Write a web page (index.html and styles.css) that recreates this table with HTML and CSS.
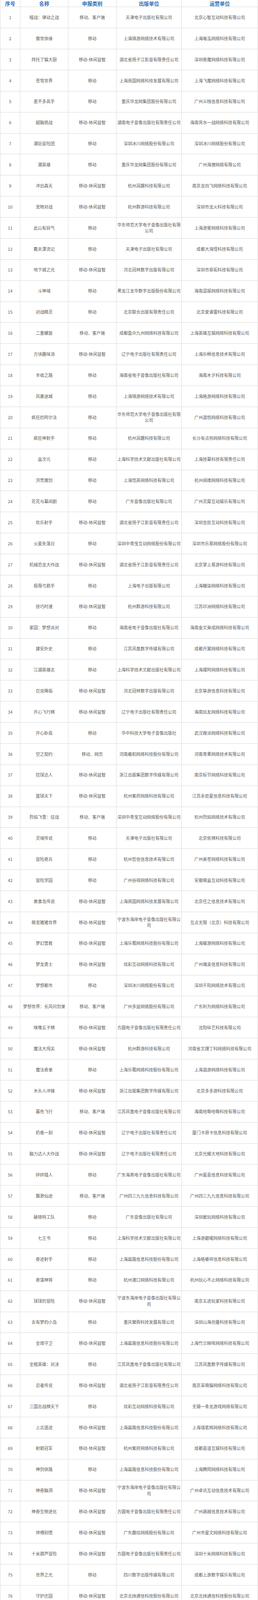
FILE: index.html
```html
<!DOCTYPE html>
<html lang="zh-CN">
<head>
<meta charset="utf-8">
<title>游戏名单</title>
<link rel="stylesheet" href="styles.css">
</head>
<body>
<div class="list" role="table">
<div class="row head" role="row"><div class="cell">序号</div><div class="cell">名称</div><div class="cell">申报类别</div><div class="cell">出版单位</div><div class="cell">运营单位</div></div>
<div class="row" role="row"><div class="cell">1</div><div class="cell">暗战：律动之战</div><div class="cell">移动、客户端</div><div class="cell">天津电子出版社有限公司</div><div class="cell">北京心智互动科技有限公司</div></div>
<div class="row" role="row"><div class="cell">2</div><div class="cell">傲世侠缘</div><div class="cell">移动</div><div class="cell">上海锦游网络技术有限公司</div><div class="cell">上海喻泓网络科技有限公司</div></div>
<div class="row" role="row"><div class="cell">3</div><div class="cell">拜托了猫大厨</div><div class="cell">移动-休闲益智</div><div class="cell">湖北省扬子江影音有限责任公司</div><div class="cell">深圳奇魔网络科技有限公司</div></div>
<div class="row" role="row"><div class="cell">4</div><div class="cell">苍穹世界</div><div class="cell">移动</div><div class="cell">上海商国网络科技发展有限公司</div><div class="cell">上海飞魔网络科技有限公司</div></div>
<div class="row" role="row"><div class="cell">5</div><div class="cell">差不多高手</div><div class="cell">移动</div><div class="cell">重庆华龙网集团股份有限公司</div><div class="cell">广州义栈信息科技有限公司</div></div>
<div class="row" role="row"><div class="cell">6</div><div class="cell">超脑挑战</div><div class="cell">移动-休闲益智</div><div class="cell">湖南电子音像出版社有限责任公司</div><div class="cell">海南背水一战网络科技有限公司</div></div>
<div class="row" role="row"><div class="cell">7</div><div class="cell">潮玩冒险团</div><div class="cell">移动</div><div class="cell">深圳冰川网络股份有限公司</div><div class="cell">深圳冰川网络股份有限公司</div></div>
<div class="row" role="row"><div class="cell">8</div><div class="cell">潮英雄</div><div class="cell">移动</div><div class="cell">重庆华龙网集团股份有限公司</div><div class="cell">广州海狸网络有限公司</div></div>
<div class="row" role="row"><div class="cell">9</div><div class="cell">冲出森天</div><div class="cell">移动-休闲益智</div><div class="cell">杭州润趣科技有限公司</div><div class="cell">南京龙向飞网络科技有限公司</div></div>
<div class="row" role="row"><div class="cell">10</div><div class="cell">宠物对战</div><div class="cell">移动-休闲益智</div><div class="cell">杭州群游科技有限公司</div><div class="cell">深圳市龙火科技有限公司</div></div>
<div class="row" role="row"><div class="cell">11</div><div class="cell">此山有妖气</div><div class="cell">移动</div><div class="cell">华东师范大学电子音像出版社有限公司</div><div class="cell">上海游斐网络科技有限公司</div></div>
<div class="row" role="row"><div class="cell">12</div><div class="cell">戴夫漂流记</div><div class="cell">移动</div><div class="cell">天津电子出版社有限公司</div><div class="cell">成都大海怪科技有限公司</div></div>
<div class="row" role="row"><div class="cell">13</div><div class="cell">地下城之光</div><div class="cell">移动-休闲益智</div><div class="cell">河北冠林数字出版有限公司</div><div class="cell">深圳市菲拓科技有限公司</div></div>
<div class="row" role="row"><div class="cell">14</div><div class="cell">斗神域</div><div class="cell">移动</div><div class="cell">黑龙江龙华数字出版股份有限公司</div><div class="cell">海南逗娱网络科技有限公司</div></div>
<div class="row" role="row"><div class="cell">15</div><div class="cell">对战精灵</div><div class="cell">移动</div><div class="cell">北京联合出版有限责任公司</div><div class="cell">北京爱谱雷科技有限公司</div></div>
<div class="row" role="row"><div class="cell">16</div><div class="cell">二重螺旋</div><div class="cell">移动、客户端</div><div class="cell">成都盈众九州网络科技有限公司</div><div class="cell">上海英雄互娱网络科技有限公司</div></div>
<div class="row" role="row"><div class="cell">17</div><div class="cell">方块趣味消</div><div class="cell">移动-休闲益智</div><div class="cell">辽宁电子出版社有限责任公司</div><div class="cell">上海乐畅信息技术有限公司</div></div>
<div class="row" role="row"><div class="cell">18</div><div class="cell">丰收之路</div><div class="cell">移动</div><div class="cell">海南省电子音像出版社有限公司</div><div class="cell">海南木夕科技有限公司</div></div>
<div class="row" role="row"><div class="cell">19</div><div class="cell">风暴迷城</div><div class="cell">移动</div><div class="cell">上海锦游网络技术有限公司</div><div class="cell">上海皓游网络科技有限公司</div></div>
<div class="row" role="row"><div class="cell">20</div><div class="cell">疯狂的阿尔法</div><div class="cell">移动</div><div class="cell">华东师范大学电子音像出版社有限公司</div><div class="cell">广州迦悦网络科技有限公司</div></div>
<div class="row" role="row"><div class="cell">21</div><div class="cell">疯狂神射手</div><div class="cell">移动</div><div class="cell">杭州润趣科技有限公司</div><div class="cell">长沙有点热网络科技有限公司</div></div>
<div class="row" role="row"><div class="cell">22</div><div class="cell">盒次元</div><div class="cell">移动</div><div class="cell">上海科学技术文献出版社有限公司</div><div class="cell">上海技幕科技有限责任公司</div></div>
<div class="row" role="row"><div class="cell">23</div><div class="cell">洪荒傲剑</div><div class="cell">移动</div><div class="cell">上海恺英网络科技有限公司</div><div class="cell">杭州闻维网络科技有限公司</div></div>
<div class="row" role="row"><div class="cell">24</div><div class="cell">花花与幕间剧</div><div class="cell">移动</div><div class="cell">广东音像出版社有限公司</div><div class="cell">广州灵犀互动娱乐有限公司</div></div>
<div class="row" role="row"><div class="cell">25</div><div class="cell">欢乐射手</div><div class="cell">移动-休闲益智</div><div class="cell">湖北省扬子江影音有限责任公司</div><div class="cell">深圳全民互动科技有限公司</div></div>
<div class="row" role="row"><div class="cell">26</div><div class="cell">火星失落日</div><div class="cell">移动</div><div class="cell">深圳中青宝互动网络股份有限公司</div><div class="cell">深圳市乐易网络股份有限公司</div></div>
<div class="row" role="row"><div class="cell">27</div><div class="cell">机械恐龙大作战</div><div class="cell">移动-休闲益智</div><div class="cell">湖北省扬子江影音有限责任公司</div><div class="cell">北京掌上易游科技有限公司</div></div>
<div class="row" role="row"><div class="cell">28</div><div class="cell">极限弓箭手</div><div class="cell">移动</div><div class="cell">上海电子出版有限公司</div><div class="cell">上海糖柒网络科技有限公司</div></div>
<div class="row" role="row"><div class="cell">29</div><div class="cell">技巧时速</div><div class="cell">移动-休闲益智</div><div class="cell">杭州群游科技有限公司</div><div class="cell">江苏印洲网络科技有限公司</div></div>
<div class="row" role="row"><div class="cell">30</div><div class="cell">家园：梦想派对</div><div class="cell">移动</div><div class="cell">海南省电子音像出版社有限公司</div><div class="cell">海南金文昊成网络科技有限公司</div></div>
<div class="row" role="row"><div class="cell">31</div><div class="cell">建安外史</div><div class="cell">移动</div><div class="cell">江苏凤凰数字传媒有限公司</div><div class="cell">成都开翼网络科技有限公司</div></div>
<div class="row" role="row"><div class="cell">32</div><div class="cell">江湖英雄志</div><div class="cell">移动</div><div class="cell">上海科学技术文献出版社有限公司</div><div class="cell">上海爆阿网络科技有限公司</div></div>
<div class="row" role="row"><div class="cell">33</div><div class="cell">巨虫降临</div><div class="cell">移动-休闲益智</div><div class="cell">河北冠林数字出版有限公司</div><div class="cell">北京挚游信息科技有限公司</div></div>
<div class="row" role="row"><div class="cell">34</div><div class="cell">开心飞行棋</div><div class="cell">移动-休闲益智</div><div class="cell">辽宁电子出版社有限责任公司</div><div class="cell">海南玩友网络科技有限公司</div></div>
<div class="row" role="row"><div class="cell">35</div><div class="cell">开心卧底</div><div class="cell">移动</div><div class="cell">华中科技大学电子音像出版社</div><div class="cell">武汉微派网络科技有限公司</div></div>
<div class="row" role="row"><div class="cell">36</div><div class="cell">空之契约</div><div class="cell">移动、网页</div><div class="cell">河南羲和网络科技股份有限公司</div><div class="cell">河南青果网络技术有限公司</div></div>
<div class="row" role="row"><div class="cell">37</div><div class="cell">控球达人</div><div class="cell">移动-休闲益智</div><div class="cell">浙江出版集团数字传媒有限公司</div><div class="cell">南京标节网络科技有限公司</div></div>
<div class="row" role="row"><div class="cell">38</div><div class="cell">篮球天下</div><div class="cell">移动-休闲益智</div><div class="cell">杭州紫府网络科技有限公司</div><div class="cell">江苏永炬星信息科技有限公司</div></div>
<div class="row" role="row"><div class="cell">39</div><div class="cell">烈焰飞雪：征战</div><div class="cell">移动、客户端</div><div class="cell">深圳中青宝互动网络股份有限公司</div><div class="cell">杭州烈焰网络技术有限公司</div></div>
<div class="row" role="row"><div class="cell">40</div><div class="cell">灵域传说</div><div class="cell">移动</div><div class="cell">天津电子出版社有限公司</div><div class="cell">北京依祺科技有限公司</div></div>
<div class="row" role="row"><div class="cell">41</div><div class="cell">冒险奇兵</div><div class="cell">移动</div><div class="cell">杭州哲信信息技术有限公司</div><div class="cell">广州昊苍网络科技有限公司</div></div>
<div class="row" role="row"><div class="cell">42</div><div class="cell">冒险学园</div><div class="cell">移动</div><div class="cell">广州谷得网络科技有限公司</div><div class="cell">安徽萌盒互动科技有限公司</div></div>
<div class="row" role="row"><div class="cell">43</div><div class="cell">美食岛传说</div><div class="cell">移动-休闲益智</div><div class="cell">上海商国网络科技发展有限公司</div><div class="cell">北京任之信息技术有限公司</div></div>
<div class="row" role="row"><div class="cell">44</div><div class="cell">萌宠猪猪世界</div><div class="cell">移动-休闲益智</div><div class="cell">宁波东海岸电子音像出版社有限公司</div><div class="cell">互点无限（北京）科技有限公司</div></div>
<div class="row" role="row"><div class="cell">45</div><div class="cell">梦幻营救</div><div class="cell">移动-休闲益智</div><div class="cell">上海乐蜀网络科技股份有限公司</div><div class="cell">上海耀游网络科技有限公司</div></div>
<div class="row" role="row"><div class="cell">46</div><div class="cell">梦龙勇士</div><div class="cell">移动-休闲益智</div><div class="cell">炫彩互动网络科技有限公司</div><div class="cell">广州瀚浚信息科技有限公司</div></div>
<div class="row" role="row"><div class="cell">47</div><div class="cell">梦想都市</div><div class="cell">移动</div><div class="cell">深圳冰川网络股份有限公司</div><div class="cell">深圳千阳网络技术有限公司</div></div>
<div class="row" role="row"><div class="cell">48</div><div class="cell">梦想世界：长风问剑录</div><div class="cell">移动、客户端</div><div class="cell">广州多益网络股份有限公司</div><div class="cell">广东利为网络科技有限公司</div></div>
<div class="row" role="row"><div class="cell">49</div><div class="cell">咪噜五子棋</div><div class="cell">移动-休闲益智</div><div class="cell">方圆电子音像出版社有限责任公司</div><div class="cell">沈阳纵艺科技有限公司</div></div>
<div class="row" role="row"><div class="cell">50</div><div class="cell">魔法大闯关</div><div class="cell">移动-休闲益智</div><div class="cell">杭州群游科技有限公司</div><div class="cell">河南省文理丁科网络科技有限公司</div></div>
<div class="row" role="row"><div class="cell">51</div><div class="cell">魔法奇录</div><div class="cell">移动</div><div class="cell">上海乐蜀网络科技股份有限公司</div><div class="cell">上海迦游网络科技有限公司</div></div>
<div class="row" role="row"><div class="cell">52</div><div class="cell">木头人冲锋</div><div class="cell">移动-休闲益智</div><div class="cell">浙江出版集团数字传媒有限公司</div><div class="cell">北京多多游科技有限公司</div></div>
<div class="row" role="row"><div class="cell">53</div><div class="cell">暮色飞行</div><div class="cell">移动、客户端</div><div class="cell">江苏凤凰电子音像出版社有限公司</div><div class="cell">海南哈嘶哈嘶科技有限公司</div></div>
<div class="row" role="row"><div class="cell">54</div><div class="cell">奶香一刻</div><div class="cell">移动-休闲益智</div><div class="cell">辽宁电子出版社有限责任公司</div><div class="cell">厦门卡昂卡信息科技有限公司</div></div>
<div class="row" role="row"><div class="cell">55</div><div class="cell">脑力达人大作战</div><div class="cell">移动-休闲益智</div><div class="cell">辽宁电子出版社有限责任公司</div><div class="cell">北京光耀大地科技有限公司</div></div>
<div class="row" role="row"><div class="cell">56</div><div class="cell">砰砰猎人</div><div class="cell">移动</div><div class="cell">广东海燕电子音像出版社有限公司</div><div class="cell">广州星嘉信息科技有限公司</div></div>
<div class="row" role="row"><div class="cell">57</div><div class="cell">飘渺仙途</div><div class="cell">移动、客户端</div><div class="cell">广州四三九九信息科技有限公司</div><div class="cell">广州四三九九信息科技有限公司</div></div>
<div class="row" role="row"><div class="cell">58</div><div class="cell">破晓特工队</div><div class="cell">移动</div><div class="cell">广东音像出版社有限公司</div><div class="cell">深圳敢玩网络科技有限公司</div></div>
<div class="row" role="row"><div class="cell">59</div><div class="cell">七王书</div><div class="cell">移动</div><div class="cell">上海科学技术文献出版社有限公司</div><div class="cell">上海游碧曜网络科技有限公司</div></div>
<div class="row" role="row"><div class="cell">60</div><div class="cell">奇迹射手</div><div class="cell">移动</div><div class="cell">上海晨路信息科技股份有限公司</div><div class="cell">上海皓睿祥信息科技有限公司</div></div>
<div class="row" role="row"><div class="cell">61</div><div class="cell">奇谋神将</div><div class="cell">移动</div><div class="cell">杭州渡口网络科技有限公司</div><div class="cell">杭州玩心不止网络科技有限公司</div></div>
<div class="row" role="row"><div class="cell">62</div><div class="cell">球球的冒险</div><div class="cell">移动-休闲益智</div><div class="cell">宁波东海岸电子音像出版社有限公司</div><div class="cell">南京五迹玩家科技有限公司</div></div>
<div class="row" role="row"><div class="cell">63</div><div class="cell">去有梦的小岛</div><div class="cell">移动</div><div class="cell">重庆聚购科技发展有限公司</div><div class="cell">深圳山海创量科技有限公司</div></div>
<div class="row" role="row"><div class="cell">64</div><div class="cell">全境守卫</div><div class="cell">移动-休闲益智</div><div class="cell">上海晨路信息科技股份有限公司</div><div class="cell">上海竹兰映晖网络科技有限公司</div></div>
<div class="row" role="row"><div class="cell">65</div><div class="cell">全植英雄：对决</div><div class="cell">移动</div><div class="cell">江苏凤凰电子音像出版社有限公司</div><div class="cell">江苏凤凰数字传媒有限公司</div></div>
<div class="row" role="row"><div class="cell">66</div><div class="cell">忍者传说</div><div class="cell">移动-休闲益智</div><div class="cell">湖北省扬子江影音有限责任公司</div><div class="cell">南京呆萌猫网络科技有限公司</div></div>
<div class="row" role="row"><div class="cell">67</div><div class="cell">三国志战棋天下</div><div class="cell">移动</div><div class="cell">炫彩互动网络科技有限公司</div><div class="cell">无锡一条龙游戏网络有限公司</div></div>
<div class="row" role="row"><div class="cell">68</div><div class="cell">上古遗迹</div><div class="cell">移动-休闲益智</div><div class="cell">上海晨路信息科技股份有限公司</div><div class="cell">上海瑞茗辉网络科技有限公司</div></div>
<div class="row" role="row"><div class="cell">69</div><div class="cell">射箭冠军</div><div class="cell">移动-休闲益智</div><div class="cell">杭州紫府网络科技有限公司</div><div class="cell">成都嘉谊互娱科技有限公司</div></div>
<div class="row" role="row"><div class="cell">70</div><div class="cell">神剑侠路</div><div class="cell">移动</div><div class="cell">上海晨路信息科技股份有限公司</div><div class="cell">上海腾罔网络科技有限公司</div></div>
<div class="row" role="row"><div class="cell">71</div><div class="cell">神奇脑洞</div><div class="cell">移动-休闲益智</div><div class="cell">宁波东海岸电子音像出版社有限公司</div><div class="cell">广州卓讯互动信息技术有限公司</div></div>
<div class="row" role="row"><div class="cell">72</div><div class="cell">神奇生物进化</div><div class="cell">移动-休闲益智</div><div class="cell">方圆电子音像出版社有限责任公司</div><div class="cell">广州晟越信息技术有限公司</div></div>
<div class="row" role="row"><div class="cell">73</div><div class="cell">师傅别慌</div><div class="cell">移动-休闲益智</div><div class="cell">广东趣炫网络股份有限公司</div><div class="cell">广州市星文网络科技有限公司</div></div>
<div class="row" role="row"><div class="cell">74</div><div class="cell">十米葫芦冒险</div><div class="cell">移动-休闲益智</div><div class="cell">方圆电子音像出版社有限责任公司</div><div class="cell">深圳十米网络科技有限公司</div></div>
<div class="row" role="row"><div class="cell">75</div><div class="cell">世界之光</div><div class="cell">移动</div><div class="cell">四川数字出版传媒有限公司</div><div class="cell">成都上游数字娱乐有限公司</div></div>
<div class="row" role="row"><div class="cell">76</div><div class="cell">守护庄园</div><div class="cell">移动-休闲益智</div><div class="cell">北京北纬通信科技股份有限公司</div><div class="cell">北京北纬通信科技股份有限公司</div></div>
<div class="row" role="row"><div class="cell">77</div><div class="cell">守卫斗罗</div><div class="cell">移动</div><div class="cell">杭州润趣科技有限公司</div><div class="cell">安徽雷虎网络科技有限公司</div></div>
<div class="row" role="row"><div class="cell">78</div><div class="cell">台球派对</div><div class="cell">移动-休闲益智</div><div class="cell">方圆电子音像出版社有限责任公司</div><div class="cell">深圳市云图互娱网络有限公司</div></div>
<div class="row" role="row"><div class="cell">79</div><div class="cell">贪吃蛇星球</div><div class="cell">移动</div><div class="cell">广州谷得网络科技有限公司</div><div class="cell">海南巨蟹座网络科技有限公司</div></div>
<div class="row" role="row"><div class="cell">80</div><div class="cell">天命主公</div><div class="cell">移动</div><div class="cell">黑龙江龙华数字出版股份有限公司</div><div class="cell">北京尚乐科技有限公司</div></div>
<div class="row" role="row"><div class="cell">81</div><div class="cell">天天消萌宠</div><div class="cell">移动-休闲益智</div><div class="cell">上海商国网络科技发展有限公司</div><div class="cell">上海商国网络科技发展有限公司</div></div>
<div class="row" role="row"><div class="cell">82</div><div class="cell">玩转侠客</div><div class="cell">移动-休闲益智</div><div class="cell">河北冠林数字出版有限公司</div><div class="cell">上海晨禾瑞网络科技有限公司</div></div>
<div class="row" role="row"><div class="cell">83</div><div class="cell">王国守卫者</div><div class="cell">移动</div><div class="cell">河北冠林数字出版有限公司</div><div class="cell">深圳市嗨皮窝网络科技有限公司</div></div>
<div class="row" role="row"><div class="cell">84</div><div class="cell">蜗蜗队出击</div><div class="cell">移动</div><div class="cell">吉林音像出版社有限责任公司</div><div class="cell">广州去玩信息科技有限公司</div></div>
<div class="row" role="row"><div class="cell">85</div><div class="cell">我的花园世界</div><div class="cell">移动-休闲益智</div><div class="cell">浙江出版集团数字传媒有限公司</div><div class="cell">北京乐杰轮科技有限公司</div></div>
<div class="row" role="row"><div class="cell">86</div><div class="cell">我的英雄之路</div><div class="cell">移动</div><div class="cell">杭州美盛游戏技术开发有限公司</div><div class="cell">海南元月网络科技有限公司</div></div>
<div class="row" role="row"><div class="cell">87</div><div class="cell">无尽宝箱</div><div class="cell">移动</div><div class="cell">上海游族信息技术有限公司</div><div class="cell">上海月千雪信息技术有限公司</div></div>
<div class="row" role="row"><div class="cell">88</div><div class="cell">无限大冒险</div><div class="cell">移动-休闲益智</div><div class="cell">成都电子科大出版社有限责任公司</div><div class="cell">重庆浩玩信息科技有限公司</div></div>
<div class="row" role="row"><div class="cell">89</div><div class="cell">武将特萌队</div><div class="cell">移动</div><div class="cell">广东海燕电子音像出版社有限公司</div><div class="cell">益世界网络科技（广东）有限公司</div></div>
<div class="row" role="row"><div class="cell">90</div><div class="cell">武神主宰</div><div class="cell">移动-休闲益智</div><div class="cell">杭州群游科技有限公司</div><div class="cell">杭州玄元网络科技有限公司</div></div>
<div class="row" role="row"><div class="cell">91</div><div class="cell">武侠转刀</div><div class="cell">移动</div><div class="cell">咪咕互动娱乐有限公司</div><div class="cell">南京伦焰网络科技有限公司</div></div>
<div class="row" role="row"><div class="cell">92</div><div class="cell">西行纪 无双</div><div class="cell">移动</div><div class="cell">广东趣炫网络股份有限公司</div><div class="cell">广州趣悦信息技术有限公司</div></div>
<div class="row" role="row"><div class="cell">93</div><div class="cell">侠客大冒险</div><div class="cell">移动-休闲益智</div><div class="cell">天津电子出版社有限公司</div><div class="cell">上海乐萍网络科技有限公司</div></div>
<div class="row" role="row"><div class="cell">94</div><div class="cell">仙域冒险记</div><div class="cell">移动</div><div class="cell">上海声像电子出版社</div><div class="cell">上海触萌网络科技有限公司</div></div>
<div class="row" role="row"><div class="cell">95</div><div class="cell">仙缘簇</div><div class="cell">移动、客户端</div><div class="cell">上海双盟网络科技有限公司</div><div class="cell">上海恺英软件技术有限公司</div></div>
<div class="row" role="row"><div class="cell">96</div><div class="cell">消消闯天下</div><div class="cell">移动-休闲益智</div><div class="cell">上海鸿利数码科技有限公司</div><div class="cell">上海青苗科技有限公司</div></div>
<div class="row" role="row"><div class="cell">97</div><div class="cell">小将出手</div><div class="cell">移动</div><div class="cell">波克科技集团有限公司</div><div class="cell">赛韵网络科技（上海）有限公司</div></div>
<div class="row" role="row"><div class="cell">98</div><div class="cell">心动狼人</div><div class="cell">移动</div><div class="cell">上海商国网络科技发展有限公司</div><div class="cell">上海寻光长青网络科技有限公司</div></div>
<div class="row" role="row"><div class="cell">99</div><div class="cell">咻咻连萌</div><div class="cell">移动</div><div class="cell">苏州好玩友网络科技有限公司</div><div class="cell">苏州沁游网络科技有限公司</div></div>
<div class="row" role="row"><div class="cell">100</div><div class="cell">羊了个羊：星球</div><div class="cell">移动</div><div class="cell">华中科技大学电子音像出版社</div><div class="cell">北京简游科技有限公司</div></div>
<div class="row" role="row"><div class="cell">101</div><div class="cell">英雄合击</div><div class="cell">移动</div><div class="cell">重庆华龙网集团股份有限公司</div><div class="cell">海南万维科技有限公司</div></div>
<div class="row" role="row"><div class="cell">102</div><div class="cell">勇士大作战</div><div class="cell">移动</div><div class="cell">上海文艺音像电子出版社有限公司</div><div class="cell">上海呈骏网络科技有限公司</div></div>
<div class="row" role="row"><div class="cell">103</div><div class="cell">元梦小镇</div><div class="cell">移动-休闲益智</div><div class="cell">北京中娱在线网络科技有限公司</div><div class="cell">杭州卡日曲网络科技有限公司</div></div>
<div class="row" role="row"><div class="cell">104</div><div class="cell">原始人跑跳</div><div class="cell">移动-休闲益智</div><div class="cell">浙江出版集团数字传媒有限公司</div><div class="cell">南京摩佰科信息科技有限公司</div></div>
<div class="row" role="row"><div class="cell">105</div><div class="cell">援军来了</div><div class="cell">移动</div><div class="cell">上海双盟网络科技有限公司</div><div class="cell">上海沛炫网络科技有限公司</div></div>
<div class="row" role="row"><div class="cell">106</div><div class="cell">战争防御战</div><div class="cell">移动-休闲益智</div><div class="cell">杭州紫府网络科技有限公司</div><div class="cell">江苏砺兰兴瑞网络科技有限公司</div></div>
<div class="row" role="row"><div class="cell">107</div><div class="cell">遮天：世间有敌</div><div class="cell">移动</div><div class="cell">上海科学技术文献出版社有限公司</div><div class="cell">上海玮骐科技有限公司</div></div>
<div class="row" role="row"><div class="cell">108</div><div class="cell">这岛有剧本</div><div class="cell">移动</div><div class="cell">杭州烈焰网络技术有限公司</div><div class="cell">杭州同趣科技有限公司</div></div>
<div class="row" role="row"><div class="cell">109</div><div class="cell">阵线争夺战</div><div class="cell">移动-休闲益智</div><div class="cell">杭州紫府网络科技有限公司</div><div class="cell">北京赛诺斯科技发展有限责任公司</div></div>
<div class="row" role="row"><div class="cell">110</div><div class="cell">整理大师</div><div class="cell">移动-休闲益智</div><div class="cell">成都电子科大出版社有限责任公司</div><div class="cell">成都蓝飞互娱科技有限公司</div></div>
<div class="row" role="row"><div class="cell">111</div><div class="cell">指尖汉堡</div><div class="cell">移动-休闲益智</div><div class="cell">宁波东海岸电子音像出版社有限公司</div><div class="cell">深圳市神游科技股份有限公司</div></div>
<div class="row" role="row"><div class="cell">112</div><div class="cell">诸神之塔英雄的守护</div><div class="cell">移动</div><div class="cell">时代新媒体出版社有限责任公司</div><div class="cell">苏州爱洛克信息技术有限公司</div></div>
</div>
</body>
</html>
```

FILE: styles.css
```css
html, body {
  margin: 0;
  padding: 0;
  background: #ffffff;
}

body {
  font-family: "Noto Sans CJK SC", "Microsoft YaHei", sans-serif;
}

.list {
  width: 660px;
  border-left: 1px solid #d9d9d9;
  box-sizing: border-box;
}

.row {
  display: grid;
  grid-template-columns: 51px 123px 123px 167px 1fr;
  height: 53.89px;
  box-sizing: border-box;
  border-bottom: 1px solid #d9d9d9;
  overflow: hidden;
}

.row.head {
  height: 18.3px;
}

.cell {
  display: flex;
  align-items: center;
  justify-content: center;
  text-align: center;
  box-sizing: border-box;
  border-right: 1px solid #d9d9d9;
  font-size: 10.8px;
  line-height: 15.7px;
  color: #5e5e5e;
  overflow: hidden;
  min-width: 0;
}

.head .cell {
  font-size: 13px;
  font-weight: bold;
  line-height: 18px;
  color: #2a6ebb;
  align-items: flex-start;
}
```
